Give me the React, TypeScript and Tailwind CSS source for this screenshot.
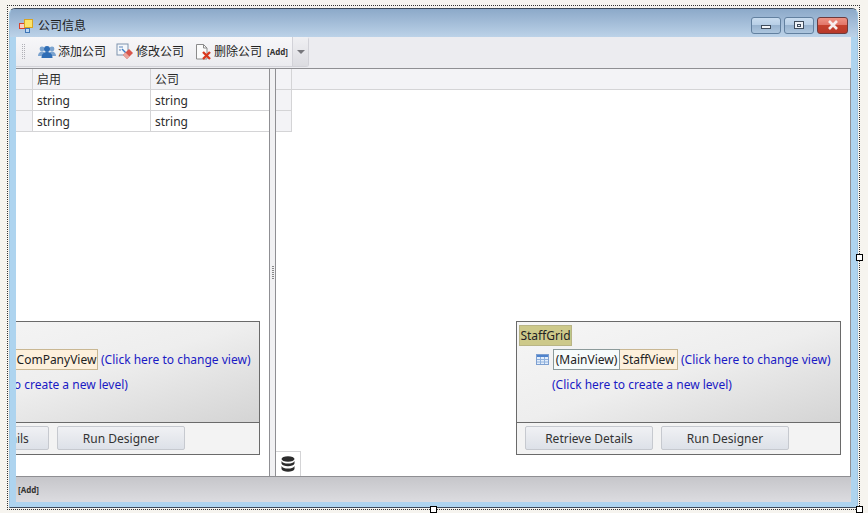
const font = "font-['Noto_Sans','Noto_Sans_CJK_SC',sans-serif]"

function AppIcon() {
  return (
    <svg width="14" height="14" viewBox="0 0 14 14">
      <rect x="0.5" y="4.5" width="5" height="5" fill="#f6d0c8" stroke="#d8432c" />
      <rect x="5.5" y="0.5" width="8" height="8" fill="#fbe36a" stroke="#d9a520" />
      <rect x="6.5" y="9.5" width="4" height="4" fill="#bcd6f2" stroke="#3d76b8" />
    </svg>
  )
}

function UsersIcon() {
  return (
    <svg width="18" height="16" viewBox="0 0 18 16">
      <circle cx="4" cy="5" r="2.4" fill="#7ba3cf" />
      <circle cx="14" cy="5" r="2.4" fill="#7ba3cf" />
      <path d="M0 12c0-3 2-4.5 4-4.5S8 9 8 12zM10 12c0-3 2-4.5 4-4.5s4 1.5 4 4.5z" fill="#7ba3cf" />
      <circle cx="9" cy="5" r="3" fill="#2f6db5" />
      <path d="M3.5 14c0-4 2.5-6 5.500-6s5.500 2 5.500 6z" fill="#2f6db5" />
    </svg>
  )
}

function EditIcon() {
  return (
    <svg width="18" height="17" viewBox="0 0 18 17">
      <rect x="1" y="1" width="11" height="11" fill="#f4f7fb" stroke="#7f93ad" />
      <path d="M3 4h4M3 7h2" stroke="#5c86bb" />
      <path d="M6 6l4 4" stroke="#3d7ec2" strokeWidth="1.500" />
      <path d="M7 12l6-6 4 4-6 6z" fill="#d8564c" />
      <path d="M7 12l2.500-2.500 4 4L11 16z" fill="#e9a49b" />
    </svg>
  )
}

function DeleteIcon() {
  return (
    <svg width="17" height="18" viewBox="0 0 17 18">
      <path d="M1.500 1.500h7l3.500 3.500v11h-10.500z" fill="#fbfbfb" stroke="#8b8b8b" />
      <path d="M8.500 1.500v3.500h3.500" fill="none" stroke="#8b8b8b" />
      <path d="M8 9l7 7M15 9l-7 7" stroke="#d9391f" strokeWidth="2.400" />
    </svg>
  )
}

function WindowButton({ kind }: { kind: "min" | "max" | "close" }) {
  if (kind === "close") {
    return (
      <div className="flex h-[17px] w-[31px] items-center justify-center rounded-[3px] border border-[#6d3a3c] bg-[linear-gradient(#ee9384_0%,#e2766a_45%,#c4402d_50%,#b8392a_100%)]">
        <svg width="12" height="10" viewBox="0 0 12 10">
          <path d="M2 1l8 8M10 1l-8 8" stroke="#f7eeee" strokeWidth="2.600" />
        </svg>
      </div>
    )
  }
  return (
    <div className="flex h-[17px] w-[30px] items-center justify-center rounded-[3px] border border-[#62809f] bg-[linear-gradient(#c9dcef_0%,#b8cfe6_45%,#98b3cf_50%,#adc6de_100%)]">
      {kind === "min" ? (
        <div className="mt-[3px] h-[4px] w-[10px] border border-[#3f4c5c] bg-[#f2f5f8]" />
      ) : (
        <div className="flex h-[8px] w-[10px] items-center justify-center border border-[#3f4c5c] bg-[#eef2f7]">
          <div className="h-[3px] w-[4px] border border-[#3f4c5c]" />
        </div>
      )}
    </div>
  )
}

function ToolButton({ icon, label, className }: { icon: React.ReactNode; label: string; className: string }) {
  return (
    <div className={`flex items-center gap-[2px] text-[12px] text-[#222] ${className}`}>
      {icon}
      <span>{label}</span>
    </div>
  )
}

function GridRow({ a, b, header }: { a: string; b: string; header?: boolean }) {
  return (
    <div className={`flex h-[21px] items-center border-b border-[#d4d4d6] text-[12px] text-[#2c2c2c] ${header ? "bg-[#f3f3f6]" : "bg-white"}`}>
      <div className="h-full w-[17px] shrink-0 border-r border-[#d4d4d6] bg-[#f3f3f6]" />
      <div className="flex h-full w-[118px] shrink-0 items-center border-r border-[#d4d4d6] pl-[4px] pt-[2px]">{a}</div>
      <div className="pl-[4px] pt-[2px]">{b}</div>
    </div>
  )
}

function TableIcon() {
  return (
    <svg width="13" height="11" viewBox="0 0 13 11">
      <rect x="0.500" y="0.500" width="12" height="10" fill="#e3eefb" stroke="#7d9fd0" />
      <rect x="1" y="1" width="11" height="2" fill="#4f83cc" />
      <path d="M1 5.500h11M1 8h11M4.500 3v7M8.500 3v7" stroke="#8fb0dc" />
    </svg>
  )
}

function DesignerPanel({ children, className }: { children: React.ReactNode; className: string }) {
  return (
    <div className={`h-[134px] shrink-0 border border-[#6a6a6a] ${className}`}>
      <div className="h-[101px] border-b border-[#6a6a6a] bg-gradient-to-br from-[#f6f6f6] via-[#eeeeee] to-[#d4d4d4] pl-[2px] pt-[3px] text-[12px]">
        {children}
      </div>
      <div className="flex h-[31px] gap-[8px] bg-[#f3f3f3] pl-[8px] pt-[3px]">
        <PanelButton label="Retrieve Details" />
        <PanelButton label="Run Designer" />
      </div>
    </div>
  )
}

function PanelButton({ label }: { label: string }) {
  return (
    <div className="flex h-[24px] w-[128px] items-center justify-center rounded-[2px] border border-[#c6c9cf] bg-gradient-to-b from-[#f0f1f4] to-[#dde1e8] pt-[2px] text-[12px] text-[#333]">
      {label}
    </div>
  )
}

function ViewLevels({ label, labelWidth, gridName }: { label: string; labelWidth: string; gridName?: string }) {
  return (
    <div className="flex flex-col">
      <div className="flex h-[21px] items-center">
        {gridName && (
          <div className="flex h-[21px] w-[53px] items-center justify-center border border-[#b9b585] bg-[#cdc98a] text-[#222]">
            {gridName}
          </div>
        )}
      </div>
      <div className="mt-[3px] flex h-[21px] items-center pl-[17px]">
        <TableIcon />
        <div className="ml-[4px] flex h-[21px] w-[67px] items-center justify-center border border-[#8c9a9a] bg-[#f6fbfb] text-[#222]">(MainView)</div>
        <div className={`flex h-[21px] items-center justify-center border border-l-0 border-[#c9b793] bg-[#fdf0dc] text-[#222] ${labelWidth}`}>{label}</div>
        <span className="ml-[3px] whitespace-nowrap text-[#1a1ac4]">(Click here to change view)</span>
      </div>
      <div className="mt-[4px] flex h-[21px] items-center pl-[33px] text-[#1a1ac4]">(Click here to create a new level)</div>
    </div>
  )
}

export default function App() {
  return (
    <div className={`relative h-[513px] w-[868px] overflow-hidden bg-[#f6f4ef] pl-[7px] pt-[5px] ${font}`}>
      <div className="h-[505px] w-[853px] border border-dotted border-[#333] pl-px pt-[2px]">
        <div className="flex h-[500px] w-[849px] flex-col rounded-t-[6px] border border-x-[#9fc4e0] border-y-[#3c4a5a] bg-[#aed4ef] px-[6px] pb-[5px]">
          <div className="-mx-[6px] flex h-[28px] shrink-0 items-center rounded-t-[5px] bg-gradient-to-b from-[#8ca9c9] to-[#bcd2e8] px-[6px] pt-[6px]">
            <div className="ml-[3px]"><AppIcon /></div>
            <span className="ml-[5px] text-[12px] text-[#1c1c1c]">公司信息</span>
            <div className="-mt-[2px] ml-auto mr-[3px] flex gap-[3px]">
              <WindowButton kind="min" />
              <WindowButton kind="max" />
              <WindowButton kind="close" />
            </div>
          </div>
          <div className="flex min-h-0 flex-1 flex-col bg-white">
            <div className="flex h-[31px] shrink-0 bg-[#ececf0]">
              <div className="flex h-[30px] w-[293px] items-center rounded-r-[3px] border-r border-b border-[#d2d2d8] bg-gradient-to-b from-[#f7f7f9] to-[#ebebef]">
                <div className="ml-[6px] h-[15px] w-[3px] border-x border-dotted border-[#b0b0b6]" />
                <ToolButton className="ml-[13px]" icon={<UsersIcon />} label="添加公司" />
                <ToolButton className="ml-[10px]" icon={<EditIcon />} label="修改公司" />
                <ToolButton className="ml-[11px]" icon={<DeleteIcon />} label="删除公司" />
                <span className="ml-[5px] text-[8px] font-bold text-[#333]">[Add]</span>
                <div className="ml-auto flex h-full w-[16px] items-center justify-center border-l border-[#d2d2d8] bg-gradient-to-b from-[#f0f0f3] to-[#dcdce1]">
                  <div className="h-0 w-0 border-x-[4px] border-t-[4px] border-x-transparent border-t-[#77777c]" />
                </div>
              </div>
            </div>
            <div className="flex min-h-0 flex-1 border-r border-t border-[#8f8f93]">
              <div className="flex w-[254px] shrink-0 flex-col overflow-hidden border-r border-[#8f8f93]">
                <GridRow a="启用" b="公司" header />
                <GridRow a="string" b="string" />
                <GridRow a="string" b="string" />
                <div className="flex-1" />
                <DesignerPanel className="mb-[21px] ml-[-104px] w-[348px]">
                  <ViewLevels label="ComPanyView" labelWidth="w-[82px]" />
                </DesignerPanel>
              </div>
              <div className="flex w-[5px] shrink-0 items-center justify-center bg-[#f1f1f3]">
                <div className="h-[14px] w-[2px] bg-[repeating-linear-gradient(#888_0_1px,transparent_1px_2px)]" />
              </div>
              <div className="relative flex min-w-0 flex-1 flex-col border-l border-[#8f8f93]">
                <div className="flex h-[21px] border-b border-[#d4d4d6] bg-[#f3f3f6]">
                  <div className="w-[16px] border-r border-[#d4d4d6]" />
                </div>
                <div className="h-[21px] w-[16px] border-r border-b border-[#d4d4d6] bg-[#f3f3f6]" />
                <div className="h-[21px] w-[16px] border-r border-b border-[#d4d4d6] bg-[#f3f3f6]" />
                <div className="flex-1" />
                <DesignerPanel className="mb-[21px] ml-[240px] w-[325px]">
                  <ViewLevels label="StaffView" labelWidth="w-[58px]" gridName="StaffGrid" />
                </DesignerPanel>
                <div className="absolute bottom-0 left-0 flex h-[25px] w-[25px] items-center justify-center border-t border-r border-[#d4d4d6] bg-white">
                  <svg width="14" height="16" viewBox="0 0 14 16" fill="#2c2c2c">
                    <ellipse cx="7" cy="3" rx="6.500" ry="2.800" />
                    <path d="M0.500 5c1 1.800 3.500 2.600 6.500 2.600S12.500 6.800 13.500 5v2.500C13 9.300 10 10.200 7 10.200S1 9.300.5 7.500z" />
                    <path d="M0.500 10c1 1.800 3.500 2.600 6.500 2.600s5.500-.8 6.500-2.600v3c-.5 1.800-3.500 2.700-6.500 2.700S1 14.800.5 13z" />
                  </svg>
                </div>
              </div>
            </div>
            <div className="flex h-[26px] shrink-0 items-center border-t border-[#8f8f93] bg-gradient-to-b from-[#c6c6ca] to-[#dcdce0] pl-[2px] text-[8px] font-bold text-[#333]">
              [Add]
            </div>
          </div>
        </div>
      </div>
      <div className="absolute left-[856px] top-[254px] h-[7px] w-[7px] border border-black bg-white" />
      <div className="absolute left-[430px] top-[506px] h-[7px] w-[7px] border border-black bg-white" />
      <div className="absolute left-[856px] top-[506px] h-[7px] w-[7px] border border-black bg-white" />
    </div>
  )
}
